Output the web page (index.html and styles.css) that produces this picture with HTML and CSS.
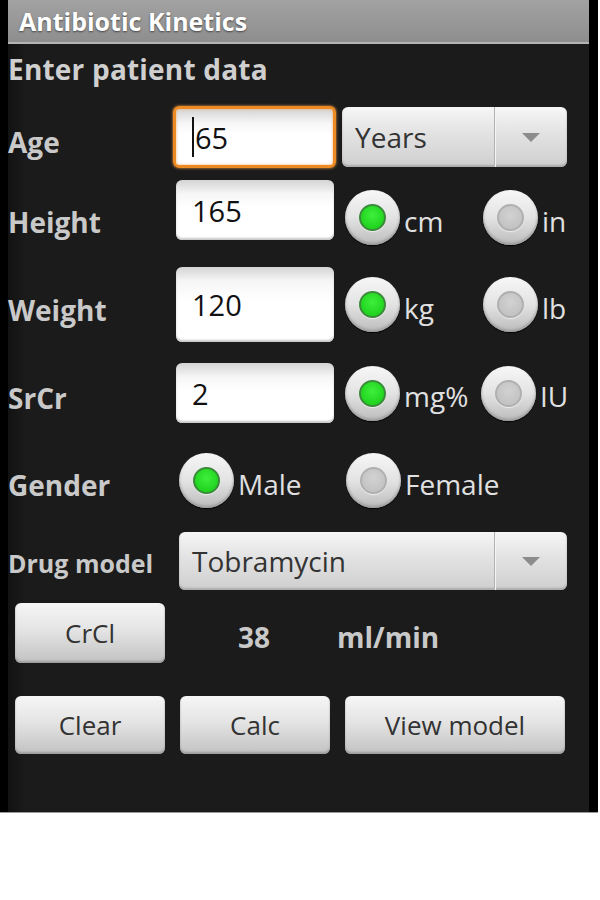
FILE: index.html
```html
<!DOCTYPE html>
<html>
<head>
<meta charset="utf-8">
<link rel="stylesheet" href="styles.css">
</head>
<body>
<div class="device">
  <div class="screen">
    <div class="titlebar">Antibiotic Kinetics</div>
    <div class="heading">Enter patient data</div>

    <div class="row row-age">
      <div class="label label-age">Age</div>
      <div class="input input-focused"><span class="cursor"></span>65</div>
      <div class="spinner spinner-units">
        <span class="spinner-text">Years</span>
        <span class="spinner-btn"><span class="arrow"></span></span>
      </div>
    </div>

    <div class="row row-height">
      <div class="label label-height">Height</div>
      <div class="input input-std">165</div>
      <div class="option option-first option-end"><span class="radio checked"><span class="dot"></span></span><span class="option-text">cm</span></div>
      <div class="option option-end"><span class="radio"><span class="dot"></span></span><span class="option-text">in</span></div>
    </div>

    <div class="row row-weight">
      <div class="label label-weight">Weight</div>
      <div class="input input-std input-tall">120</div>
      <div class="option option-first"><span class="radio checked"><span class="dot"></span></span><span class="option-text">kg</span></div>
      <div class="option"><span class="radio"><span class="dot"></span></span><span class="option-text">lb</span></div>
    </div>

    <div class="row row-srcr">
      <div class="label label-weight">SrCr</div>
      <div class="input input-std">2</div>
      <div class="option option-first option-narrow"><span class="radio checked"><span class="dot"></span></span><span class="option-text">mg%</span></div>
      <div class="option"><span class="radio"><span class="dot"></span></span><span class="option-text">IU</span></div>
    </div>

    <div class="row row-gender">
      <div class="label label-gender">Gender</div>
      <div class="option option-gender"><span class="radio checked"><span class="dot"></span></span><span class="option-text">Male</span></div>
      <div class="option"><span class="radio"><span class="dot"></span></span><span class="option-text">Female</span></div>
    </div>

    <div class="row row-drug">
      <div class="label label-drug">Drug model</div>
      <div class="spinner spinner-drug">
        <span class="spinner-text">Tobramycin</span>
        <span class="spinner-btn"><span class="arrow"></span></span>
      </div>
    </div>

    <div class="row row-crcl">
      <div class="button button-small">CrCl</div>
      <div class="result result-value">38</div>
      <div class="result result-unit">ml/min</div>
    </div>

    <div class="row row-buttons">
      <div class="button button-small">Clear</div>
      <div class="button button-small">Calc</div>
      <div class="button button-wide">View model</div>
    </div>
  </div>
</div>
</body>
</html>
```

FILE: styles.css
```css
* { box-sizing: border-box; }

body {
  margin: 0;
  background: #ffffff;
  font-family: "Open Sans", "DejaVu Sans", sans-serif;
}

.device {
  width: 598px;
  height: 813px;
  background: #000;
  padding-left: 8px;
  border-bottom: 1px solid #9a9a9a;
}

.screen {
  width: 581px;
  height: 812px;
  background: linear-gradient(to right, #121212 0, #1b1b1b 18px, #1b1b1b 100%);
}

.titlebar {
  height: 44px;
  line-height: 42px;
  padding-left: 11px;
  background: linear-gradient(#a2a2a2, #8e8e8e);
  border-bottom: 2px solid #b4b4b4;
  color: #fff;
  font-weight: 700;
  font-size: 25px;
  text-shadow: 0 1px 2px #444;
}

.heading {
  height: 50px;
  line-height: 50px;
  color: #cfcfcf;
  font-weight: 700;
  font-size: 28px;
  letter-spacing: 0.2px;
}

.row {
  display: flex;
  align-items: center;
}

.label {
  flex: none;
  color: #c9c9c9;
  font-weight: 700;
  font-size: 28px;
  line-height: 36px;
}

.label-age { width: 165px; padding-top: 10px; }
.label-height { width: 168px; padding-top: 18px; }
.label-weight { width: 168px; padding-top: 10px; }
.label-gender { width: 171px; padding-top: 8px; }
.label-drug { width: 171px; padding-top: 4px; font-size: 25px; }

/* text inputs */
.input {
  flex: none;
  display: flex;
  align-items: center;
  border-radius: 6px;
  background: linear-gradient(#d4d4d4 0, #f6f6f6 14px, #ffffff 45%, #ffffff 100%);
  box-shadow: inset 0 -2px 2px #c8c8c8;
  color: #111;
  font-size: 29px;
}

.input-std {
  width: 158px;
  height: 60px;
  padding-left: 16px;
}

.input-tall { height: 75px; }

.input-focused {
  width: 163px;
  height: 62px;
  padding-left: 16px;
  border: 3px solid #ee8a23;
  box-shadow: 0 0 3px #f4a04a, inset 0 0 3px #f0b070;
}

.cursor {
  width: 2px;
  height: 40px;
  background: #111;
  margin-right: 1px;
}

/* spinners */
.spinner {
  flex: none;
  display: flex;
  height: 60px;
  border-radius: 6px;
  background: linear-gradient(#f6f6f6 0, #e2e2e2 45%, #cfcfcf 100%);
  box-shadow: inset 0 -2px 2px #aaa;
  color: #333;
  font-size: 28px;
}

.spinner-units {
  width: 225px;
  margin-left: 6px;
}

.spinner-drug {
  width: 388px;
  height: 58px;
}

.spinner-text {
  flex: 1;
  display: flex;
  align-items: center;
  padding-left: 13px;
}

.spinner-btn {
  flex: none;
  width: 73px;
  display: flex;
  align-items: center;
  justify-content: center;
  border-left: 1px solid #b2b2b2;
  box-shadow: inset 1px 0 0 #f4f4f4;
}

.arrow {
  width: 0;
  height: 0;
  border-left: 9px solid transparent;
  border-right: 9px solid transparent;
  border-top: 9px solid #8c8c8c;
}

/* radio options */
.option {
  flex: none;
  display: flex;
  align-items: center;
}

.option-first { width: 138px; margin-left: 11px; }
.option-narrow { width: 136px; }
.option-gender { width: 167px; }
.option-end { align-self: flex-end; }

.radio {
  width: 55px;
  height: 55px;
  border-radius: 50%;
  display: flex;
  align-items: center;
  justify-content: center;
  background: linear-gradient(#f7f7f7 0, #e3e3e3 50%, #bcbcbc 100%);
  box-shadow: inset 0 -2px 3px #9a9a9a, 0 1px 1px #000;
}

.dot {
  width: 27px;
  height: 27px;
  border-radius: 50%;
  background: radial-gradient(circle at 50% 40%, #d2d2d2, #bdbdbd);
  border: 2px solid #b0b0b0;
  box-shadow: 0 1px 1px #eee;
}

.checked .dot {
  background: radial-gradient(circle at 50% 40%, #3ef03a, #14c814);
  border: 2px solid #3c8a3c;
}

.option-text {
  margin-left: 4px;
  color: #e0e0e0;
  font-size: 28px;
  padding-top: 6px;
}

/* buttons */
.button {
  flex: none;
  height: 58px;
  display: flex;
  align-items: center;
  justify-content: center;
  border-radius: 6px;
  background: linear-gradient(#f6f6f6 0, #e4e4e4 45%, #c2c2c2 100%);
  box-shadow: inset 0 -2px 2px #9e9e9e;
  color: #333;
  font-size: 26px;
}

.button-small { width: 150px; }
.button-wide { width: 220px; }

.row-buttons .button:first-child { margin-left: 7px; }
.row-buttons .button + .button { margin-left: 15px; }

.row-crcl .button { margin-left: 7px; height: 60px; }

.result {
  color: #c9c9c9;
  font-weight: 700;
  font-size: 28px;
  padding-top: 8px;
}

.result-value { margin-left: 73px; }
.result-unit { margin-left: 67px; }

/* row placement */
.row-age { margin-top: 12px; height: 62px; }
.row-height { margin-top: 12px; height: 65px; }
.row-height .input { align-self: flex-start; }
.row-weight { margin-top: 22px; height: 75px; }
.row-srcr { margin-top: 21px; height: 60px; }
.row-gender { margin-top: 30px; height: 55px; }
.row-drug { margin-top: 24px; height: 58px; }
.row-crcl { margin-top: 13px; height: 60px; }
.row-buttons { margin-top: 33px; height: 58px; }
```
